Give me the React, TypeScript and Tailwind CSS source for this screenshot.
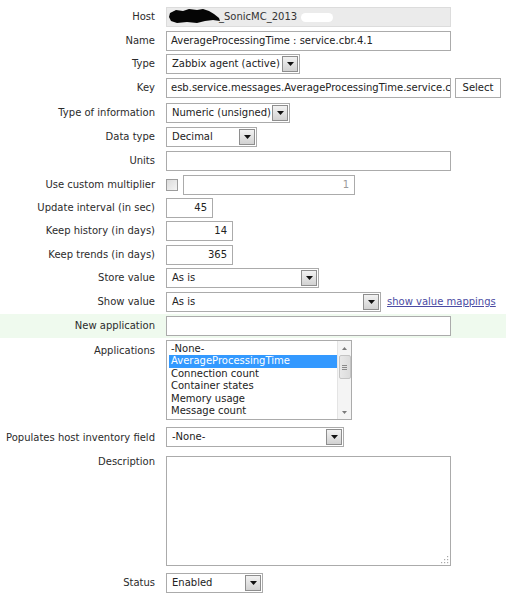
import type { ReactNode } from 'react'

const FONT = "font-['DejaVu_Sans',Verdana,sans-serif]"

function Arrow() {
  return (
    <span className="flex h-full w-[16px] flex-shrink-0 items-center justify-center border border-[#8e8e8e] bg-gradient-to-b from-[#f2f2f2] to-[#d2d2d2]">
      <svg width="7" height="4" viewBox="0 0 7 4">
        <path d="M0 0h7L3.5 4z" fill="#111" />
      </svg>
    </span>
  )
}

function Select({ w, value }: { w: number; value: string }) {
  return (
    <div
      className="flex h-[20px] items-center border border-[#ababab] bg-white p-px"
      style={{ width: w }}
    >
      <span className="flex-1 truncate pl-[4px] text-[#222]">{value}</span>
      <Arrow />
    </div>
  )
}

function TextBox({
  w,
  value = '',
  right,
  muted,
}: {
  w: number
  value?: string
  right?: boolean
  muted?: boolean
}) {
  return (
    <div
      className={`flex h-[20px] items-center overflow-hidden whitespace-nowrap border border-[#ababab] bg-white px-[4px] ${
        right ? 'justify-end pr-[5px]' : ''
      } ${muted ? 'text-[#9a9a9a]' : 'text-[#222]'}`}
      style={{ width: w }}
    >
      {value}
    </div>
  )
}

function Row({
  label,
  h,
  top,
  labelPad = 0,
  className = '',
  children,
}: {
  label: string
  h: number
  top?: boolean
  labelPad?: number
  className?: string
  children: ReactNode
}) {
  return (
    <div
      className={`flex ${top ? 'items-start pt-[2px]' : 'items-center'} ${className}`}
      style={{ height: h }}
    >
      <div
        className="w-[166px] flex-shrink-0 whitespace-nowrap pr-[11px] text-right text-[#2b2b2b]"
        style={top ? { paddingTop: labelPad } : undefined}
      >
        {label}
      </div>
      <div className="flex items-center gap-[4px]">{children}</div>
    </div>
  )
}

const applications = [
  '-None-',
  'AverageProcessingTime',
  'Connection count',
  'Container states',
  'Memory usage',
  'Message count',
]

function ListBox() {
  return (
    <div className="flex h-[80px] w-[186px] border border-[#ababab] bg-white">
      <div className="flex-1 overflow-hidden pl-[2px] pt-[2px]">
        {applications.map((a, i) => (
          <div
            key={a}
            className={`h-[12.4px] pl-[2px] leading-[12.4px] ${
              i === 1 ? 'bg-[#3399ff] text-white' : 'text-[#222]'
            }`}
          >
            {a}
          </div>
        ))}
      </div>
      <div className="flex w-[14px] flex-col items-center border-l border-[#e4e4e4] bg-[#f4f4f4]">
        <div className="flex h-[14px] items-center">
          <svg width="5" height="3" viewBox="0 0 5 3">
            <path d="M0 3h5L2.5 0z" fill="#7a7a7a" />
          </svg>
        </div>
        <div className="flex h-[24px] w-[12px] flex-col items-center justify-center gap-[1px] rounded-[2px] border border-[#c4c4c4] bg-gradient-to-r from-[#e8e8e8] to-[#dcdcdc]">
          <span className="h-px w-[5px] bg-[#8a8a8a]" />
          <span className="h-px w-[5px] bg-[#8a8a8a]" />
          <span className="h-px w-[5px] bg-[#8a8a8a]" />
        </div>
        <div className="flex-1" />
        <div className="flex h-[14px] items-center">
          <svg width="5" height="3" viewBox="0 0 5 3">
            <path d="M0 0h5L2.5 3z" fill="#7a7a7a" />
          </svg>
        </div>
      </div>
    </div>
  )
}

export default function App() {
  return (
    <div className={`${FONT} w-[506px] bg-white pt-[5px] text-[10px] leading-[12px]`}>
      <Row label="Host" h={24}>
        <div className="relative flex h-[20px] w-[285px] items-center border border-[#dcdcdc] bg-[#ebebeb] pl-[52px] text-[#333]">
          {/* scribbled-out host prefix */}
          <svg className="absolute left-[2px] top-[1px]" width="52" height="15" viewBox="0 0 52 15">
            <path
              d="M1 4 L7 1 L14 2 L20 0 L28 1 L34 0 L40 2 L45 5 L50 9 L51 12 L44 11 L36 12 L28 14 L18 13 L8 14 L2 12 L0 8 Z"
              fill="#050505"
            />
          </svg>
          _SonicMC_2013
          <span className="absolute left-[134px] top-[5px] h-[9px] w-[32px] rounded-full bg-white" />
        </div>
      </Row>
      <Row label="Name" h={23}>
        <TextBox w={285} value="AverageProcessingTime : service.cbr.4.1" />
      </Row>
      <Row label="Type" h={24}>
        <Select w={134} value="Zabbix agent (active)" />
      </Row>
      <Row label="Key" h={24}>
        <TextBox w={285} value="esb.service.messages.AverageProcessingTime.service.c" />
        <button className="h-[20px] w-[46px] border border-[#ababab] bg-white text-[#222]">
          Select
        </button>
      </Row>
      <Row label="Type of information" h={25}>
        <Select w={124} value="Numeric (unsigned)" />
      </Row>
      <Row label="Data type" h={24}>
        <Select w={91} value="Decimal" />
      </Row>
      <Row label="Units" h={24}>
        <TextBox w={285} />
      </Row>
      <Row label="Use custom multiplier" h={23}>
        <span className="mr-[1px] h-[12px] w-[12px] border border-[#9c9c9c] bg-gradient-to-br from-[#dcdcdc] to-[#f4f4f4]" />
        <TextBox w={172} value="1" right muted />
      </Row>
      <Row label="Update interval (in sec)" h={23}>
        <TextBox w={47} value="45" right />
      </Row>
      <Row label="Keep history (in days)" h={24}>
        <TextBox w={67} value="14" right />
      </Row>
      <Row label="Keep trends (in days)" h={23}>
        <TextBox w={67} value="365" right />
      </Row>
      <Row label="Store value" h={24}>
        <Select w={153} value="As is" />
      </Row>
      <Row label="Show value" h={24}>
        <Select w={215} value="As is" />
        <a className="ml-[2px] text-[#4b4ba3] underline" href="#">
          show value mappings
        </a>
      </Row>
      <Row label="New application" h={24} className="bg-[#effaee]">
        <TextBox w={285} />
      </Row>
      <Row label="Applications" h={87} top labelPad={5}>
        <ListBox />
      </Row>
      <Row label="Populates host inventory field" h={29} top labelPad={5}>
        <Select w={178} value="-None-" />
      </Row>
      <Row label="Description" h={116} top labelPad={0}>
        <div className="relative h-[110px] w-[285px] border border-[#ababab] bg-white">
          <svg className="absolute bottom-[1px] right-[1px]" width="9" height="9" viewBox="0 0 9 9">
            <g fill="#a8a8a8">
              <rect x="7" y="1" width="1.2" height="1.2" />
              <rect x="4" y="4" width="1.2" height="1.2" />
              <rect x="7" y="4" width="1.2" height="1.2" />
              <rect x="1" y="7" width="1.2" height="1.2" />
              <rect x="4" y="7" width="1.2" height="1.2" />
              <rect x="7" y="7" width="1.2" height="1.2" />
            </g>
          </svg>
        </div>
      </Row>
      <Row label="Status" h={26}>
        <Select w={97} value="Enabled" />
      </Row>
    </div>
  )
}
